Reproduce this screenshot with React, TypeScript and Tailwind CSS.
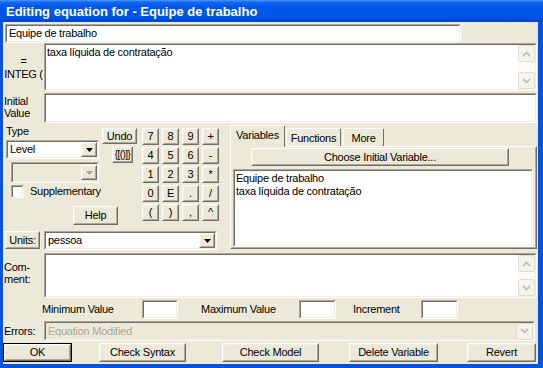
import React from "react";

const FONT = "font-['Liberation_Sans',Arial,sans-serif] text-[11px] tracking-[-0.25px] leading-[13px] text-black";

function Raised({ className = "", inner = "", children }: { className?: string; inner?: string; children?: React.ReactNode }) {
  return (
    <div className={`flex border border-t-white border-l-white border-r-[#716f64] border-b-[#716f64] bg-[#ece9d8] ${className}`}>
      <div className={`flex min-w-0 flex-1 items-center justify-center border border-t-[#f1efe2] border-l-[#f1efe2] border-r-[#aca899] border-b-[#aca899] ${inner}`}>
        {children}
      </div>
    </div>
  );
}

function Sunken({ className = "", inner = "bg-white", children }: { className?: string; inner?: string; children?: React.ReactNode }) {
  return (
    <div className={`flex border border-t-[#aca899] border-l-[#aca899] border-r-white border-b-white ${className}`}>
      <div className={`flex min-w-0 flex-1 border border-t-[#716f64] border-l-[#716f64] border-r-[#f1efe2] border-b-[#f1efe2] ${inner}`}>
        {children}
      </div>
    </div>
  );
}

function XpArrow({ up }: { up?: boolean }) {
  return (
    <div className="flex h-[17px] w-[17px] items-center justify-center rounded-[2px] border border-[#e2dfd2] bg-[#f4f3ee]">
      <svg width="9" height="6" viewBox="0 0 9 6">
        <polyline points={up ? "1,5 4.5,1.5 8,5" : "1,1 4.5,4.5 8,1"} fill="none" stroke="#c6c3b5" strokeWidth="1.8" />
      </svg>
    </div>
  );
}

function XpScroll() {
  return (
    <div className="flex w-[17px] flex-col justify-between bg-[#fbfbf8]">
      <XpArrow up />
      <XpArrow />
    </div>
  );
}

function ComboArrow({ disabled }: { disabled?: boolean }) {
  return (
    <Raised className="h-[15px] w-[16px] self-center">
      <svg width="7" height="4" viewBox="0 0 7 4">
        <polygon points="0,0 7,0 3.5,4" fill={disabled ? "#aca899" : "#000"} />
      </svg>
    </Raised>
  );
}

function Tab({ label, className = "", sel }: { label: string; className?: string; sel?: boolean }) {
  return (
    <div
      className={`relative flex items-start justify-center rounded-t-[2px] border-l border-t border-r border-l-white border-t-white border-r-[#716f64] bg-[#ece9d8] pt-[3px] ${
        sel ? "z-10 -mb-px h-[22px]" : "h-[18px]"
      } ${className}`}
    >
      {label}
    </div>
  );
}

const keys = ["7", "8", "9", "+", "4", "5", "6", "-", "1", "2", "3", "*", "0", "E", ".", "/", "(", ")", ",", "^"];

export default function App() {
  return (
    <div className={`h-[368px] w-[543px] overflow-hidden bg-[#0853de] ${FONT}`}>
      <div className="flex h-[22px] items-center bg-[linear-gradient(to_bottom,#4a9cff_0%,#1467f0_10%,#0058e8_30%,#0055e5_70%,#004ad8_92%,#0a45c8_100%)] pl-[6px] text-[13px] font-bold tracking-normal text-white">
        Editing equation for - Equipe de trabalho
      </div>
      <div className="ml-[3px] flex h-[342px] w-[535px] flex-col bg-[#ece9d8]">
        <Sunken className="ml-[2px] mt-[2px] h-[19px] w-[456px]" inner="bg-white items-center pl-[2px]">
          Equipe de trabalho
        </Sunken>

        <div className="flex h-[48px]">
          <div className="flex w-[41px] flex-col items-center justify-center pt-[2px]">
            <span>=</span>
            <span>INTEG (</span>
          </div>
          <Sunken className="w-[493px]">
            <div className="flex-1 pl-[1px] pt-[1px]">taxa líquida de contratação</div>
            <XpScroll />
          </Sunken>
        </div>

        <div className="mt-[2px] flex h-[30px]">
          <div className="flex w-[41px] flex-col pl-[1px] pt-[2px] leading-[12px]">
            <span>Initial</span>
            <span>Value</span>
          </div>
          <Sunken className="w-[493px]" />
        </div>

        <div className="flex h-[127px]">
          <div className="flex w-[227px] flex-col">
            <div className="flex">
              <div className="flex w-[134px] flex-col">
                <div className="flex">
                  <div className="flex w-[96px] flex-col">
                    <span className="ml-[3px] mt-[1px] h-[14px] leading-[14px]">Type</span>
                    <Sunken className="ml-[3px] mt-[2px] h-[19px] w-[93px]" inner="bg-white items-center pr-0">
                      <span className="flex-1 pl-[2px]">Level</span>
                      <ComboArrow />
                    </Sunken>
                    <Sunken className="ml-[8px] mt-[3px] h-[21px] w-[88px]" inner="bg-[#ece9d8] justify-end items-center">
                      <ComboArrow disabled />
                    </Sunken>
                  </div>
                  <div className="ml-[3px] mt-[5px] flex flex-col">
                    <Raised className="h-[16px] w-[35px]">Undo</Raised>
                    <Raised className="ml-[10px] mt-[2px] h-[17px] w-[21px]" inner="text-[10px] tracking-[-0.6px]">
                      {"{[()]}"}
                    </Raised>
                  </div>
                </div>
                <div className="ml-[8px] mt-[2px] flex h-[13px] items-center">
                  <Sunken className="h-[13px] w-[13px]" />
                  <span className="ml-[6px]">Supplementary</span>
                </div>
                <Raised className="ml-[70px] mt-[8px] h-[19px] w-[45px]">Help</Raised>
              </div>
              <div className="ml-[5px] mt-[5px] grid auto-rows-[17px] grid-cols-[repeat(4,17px)] gap-x-[3px] gap-y-[2px] self-start">
                {keys.map((k) => (
                  <Raised key={k} className="h-[17px] w-[17px]">
                    {k}
                  </Raised>
                ))}
              </div>
            </div>
            <div className="mt-[6px] flex">
              <Raised className="ml-[2px] h-[18px] w-[35px]">Units:</Raised>
              <Sunken className="ml-[4px] h-[19px] w-[173px]" inner="bg-white items-center">
                <span className="flex-1 pl-[2px]">pessoa</span>
                <ComboArrow />
              </Sunken>
            </div>
          </div>

          <div className="mt-[2px] flex w-[307px] flex-col">
            <div className="flex h-[21px] items-end">
              <Tab label="Variables" sel className="w-[55px]" />
              <Tab label="Functions" className="ml-px w-[55px]" />
              <Tab label="More" className="ml-[2px] w-[41px]" />
            </div>
            <div className="flex h-[103px] flex-col border border-t-white border-l-white border-r-[#716f64] border-b-[#716f64]">
              <div className="flex flex-1 flex-col border border-transparent border-r-[#aca899] border-b-[#aca899]">
                <Raised className="ml-[19px] h-[18px] w-[258px]">Choose Initial Variable...</Raised>
                <Sunken className="ml-px mt-[3px] h-[78px] w-[300px]" inner="bg-white flex-col pl-[1px] pt-[1px]">
                  <span>Equipe de trabalho</span>
                  <span>taxa líquida de contratação</span>
                </Sunken>
              </div>
            </div>
          </div>
        </div>

        <div className="mt-[3px] flex h-[45px]">
          <div className="flex w-[41px] flex-col pl-[1px] pt-[8px] leading-[12px]">
            <span>Com-</span>
            <span>ment:</span>
          </div>
          <Sunken className="w-[493px]">
            <div className="flex-1" />
            <XpScroll />
          </Sunken>
        </div>

        <div className="mt-[2px] flex h-[19px] items-center">
          <span className="ml-[39px] w-[100px]">Minimum Value</span>
          <Sunken className="h-[19px] w-[36px]" />
          <span className="ml-[23px] w-[98px]">Maximum Value</span>
          <Sunken className="h-[19px] w-[37px]" />
          <span className="ml-[17px] w-[68px]">Increment</span>
          <Sunken className="h-[19px] w-[37px]" />
        </div>

        <div className="mt-[2px] flex h-[20px] items-center">
          <span className="w-[41px] pl-px">Errors:</span>
          <Sunken className="h-[20px] w-[491px]" inner="bg-[#ece9d8] items-center">
            <span className="flex-1 pl-[2px] text-[#aca899]">Equation Modified</span>
            <XpArrow />
          </Sunken>
        </div>

        <div className="mt-[2px] flex h-[19px]">
          <div className="flex w-[69px] border border-black">
            <Raised className="flex-1">OK</Raised>
          </div>
          <Raised className="ml-[27px] w-[87px]">Check Syntax</Raised>
          <Raised className="ml-[36px] w-[97px]">Check Model</Raised>
          <Raised className="ml-[30px] w-[89px]">Delete Variable</Raised>
          <Raised className="ml-[29px] w-[69px]">Revert</Raised>
        </div>
      </div>
    </div>
  );
}
